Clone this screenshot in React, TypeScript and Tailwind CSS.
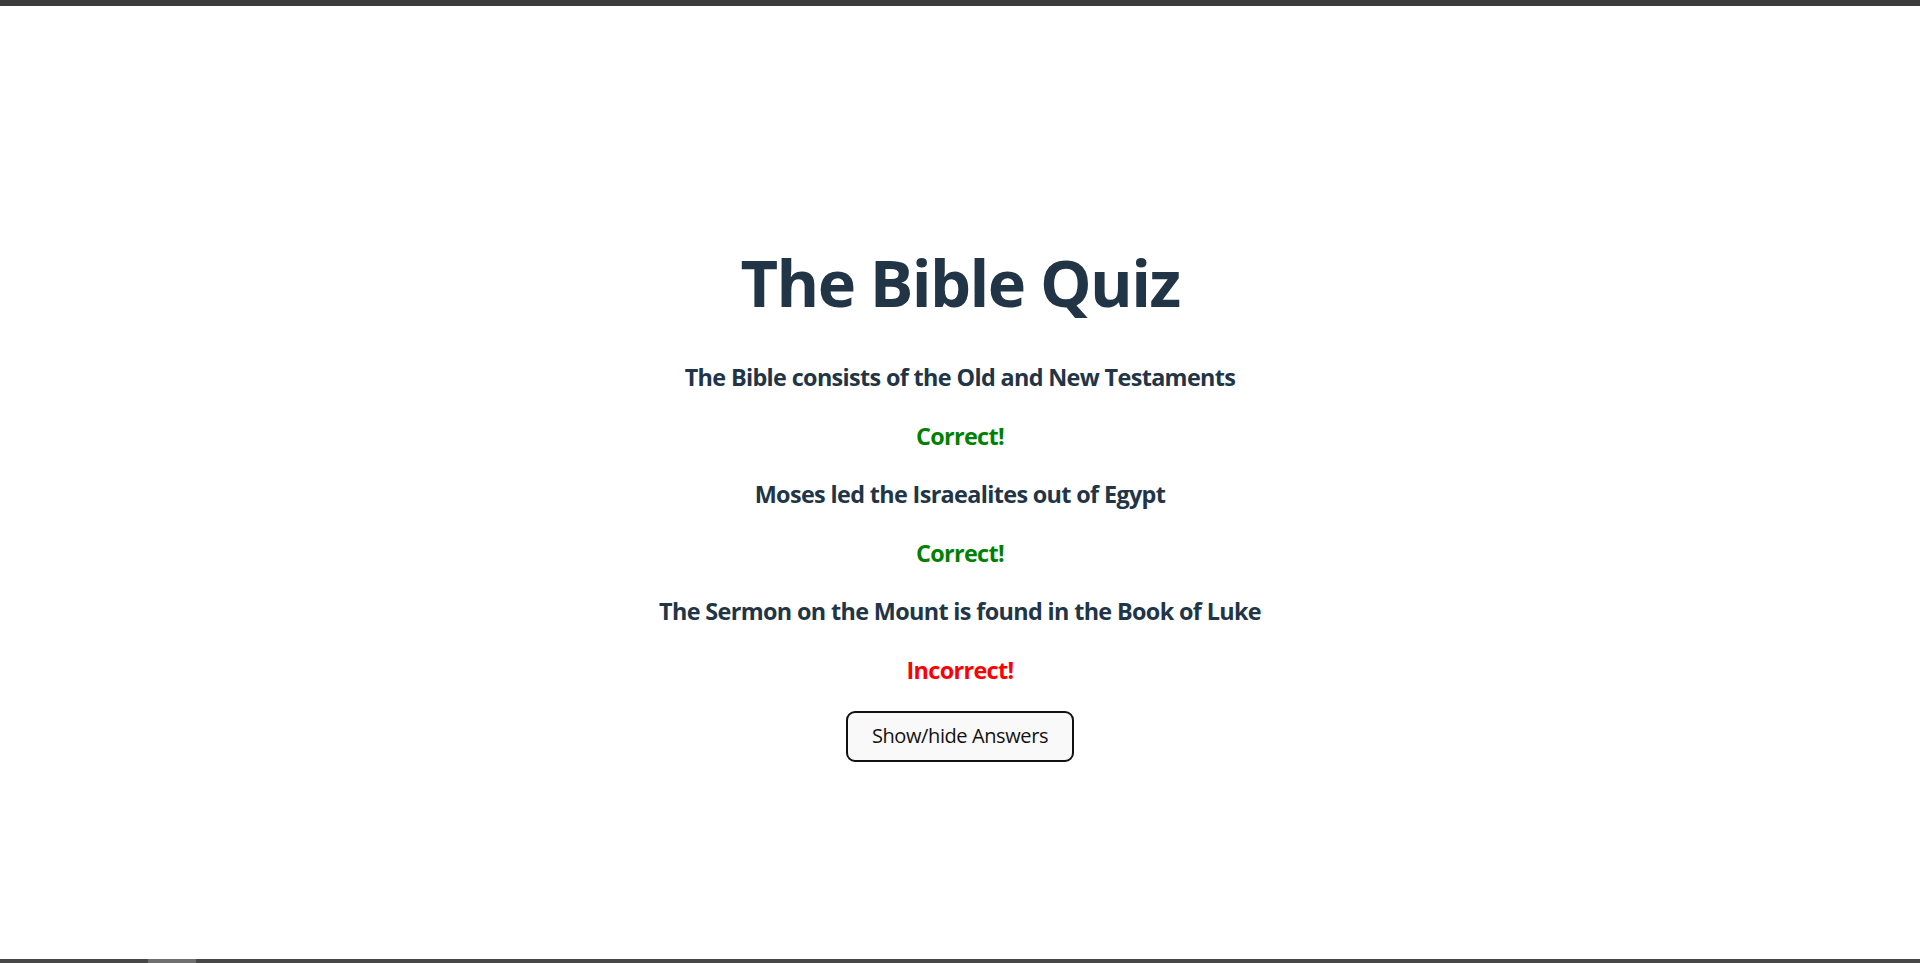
import { useState } from 'react';

interface Question {
  text: string;
  correct: boolean;
}

const questions: Question[] = [
  { text: 'The Bible consists of the Old and New Testaments', correct: true },
  { text: 'Moses led the Israealites out of Egypt', correct: true },
  { text: 'The Sermon on the Mount is found in the Book of Luke', correct: false },
];

export default function App() {
  const [showAnswers, setShowAnswers] = useState(true);

  return (
    <div
      className="h-[963px] flex flex-col bg-white text-[#213547] overflow-hidden"
      style={{ fontFamily: '"Open Sans", "Noto Sans", Arial, sans-serif' }}
    >
      {/* window chrome */}
      <div className="h-[6px] bg-[#3c3c3c]" />

      <main className="flex-1 flex flex-col items-center pt-[241px]">
        <h1 className="text-[65px] leading-[70px] font-bold tracking-[-1.6px]">The Bible Quiz</h1>

        <div className="mt-[43px] flex flex-col items-center gap-[23.5px]">
          {questions.map((q, i) => (
            <div key={i} className="flex flex-col items-center gap-[23.5px]">
              <h3 className="text-[23.4px] leading-[35px] font-bold tracking-[-0.65px]">{q.text}</h3>
              {showAnswers && (
                <p
                  className={
                    q.correct
                      ? 'text-[23.4px] leading-[35px] font-bold tracking-[-0.65px] text-[#008000]'
                      : 'text-[23.4px] leading-[35px] font-bold tracking-[-0.65px] text-[#ff0000]'
                  }
                >
                  {q.correct ? 'Correct!' : 'Incorrect!'}
                </p>
              )}
            </div>
          ))}
        </div>

        <button
          onClick={() => setShowAnswers(!showAnswers)}
          className="mt-[23px] w-[228px] h-[51px] rounded-[9px] border-2 border-[#111] bg-[#f9f9f9] text-[20px] text-[#111] font-normal tracking-[-0.4px]"
        >
          Show/hide Answers
        </button>
      </main>

      {/* scrollbar */}
      <div className="h-[4px] bg-[#474747] flex">
        <div className="ml-[148px] w-[48px] bg-[#707070]" />
      </div>
    </div>
  );
}
